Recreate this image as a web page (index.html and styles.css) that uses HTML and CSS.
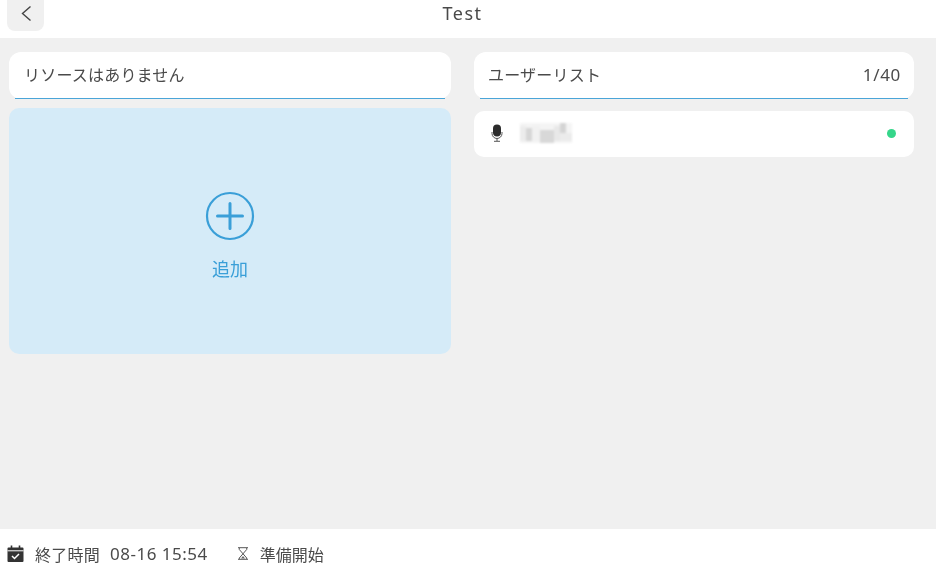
FILE: index.html
```html
<!DOCTYPE html>
<html lang="ja">
<head>
<meta charset="utf-8">
<title>Test</title>
<link rel="stylesheet" href="styles.css">
</head>
<body>
<div class="app">
  <header class="topbar">
    <button class="back" aria-label="back">
      <svg width="14" height="18" viewBox="0 0 14 18"><path d="M11.500 1.500 3.500 8.500l8 7" fill="none" stroke="#444" stroke-width="1.400"/></svg>
    </button>
    <h1 class="title">Test</h1>
  </header>
  <main class="content">
    <section class="col col-left">
      <div class="panel-head"><span>リソースはありません</span></div>
      <div class="add-card">
        <svg class="add-icon" width="50" height="50" viewBox="0 0 50 50">
          <circle cx="25" cy="25" r="23" fill="none" stroke="#3a9fd8" stroke-width="2.200"/>
          <path d="M12.500 25h25M25 12.500v25" fill="none" stroke="#3a9fd8" stroke-width="3" stroke-linecap="round"/>
        </svg>
        <span class="add-label">追加</span>
      </div>
    </section>
    <section class="col col-right">
      <div class="panel-head panel-head-right"><span>ユーザーリスト</span><span class="count">1/40</span></div>
      <div class="user-row">
        <svg class="mic" width="12" height="18" viewBox="0 0 12 18">
          <rect x="2" y="0.500" width="8" height="12" rx="4" fill="#2c2c2c"/>
          <path d="M1 8v1.500a5 5 0 0 0 10 0V8M6 14.500V17M3 17.300h6" fill="none" stroke="#555" stroke-width="1"/>
        </svg>
        <svg class="blurred" width="52" height="20" viewBox="0 0 52 20" aria-hidden="true">
          <rect width="52" height="20" fill="#f4f4f4"/>
          <rect x="0" y="3" width="6" height="15" fill="#ececec"/>
          <rect x="6" y="5" width="6" height="13" fill="#d6d6d6"/>
          <rect x="12" y="3" width="8" height="15" fill="#f1f1f1"/>
          <rect x="20" y="7" width="14" height="13" fill="#d8d8d8"/>
          <rect x="34" y="3" width="6" height="15" fill="#e8e8e8"/>
          <rect x="40" y="0" width="6" height="10" fill="#d4d4d4"/>
          <rect x="40" y="10" width="12" height="8" fill="#ebebeb"/>
        </svg>
        <span class="dot"></span>
      </div>
    </section>
  </main>
  <footer class="bottombar">
    <svg width="17" height="17" viewBox="0 0 17 17">
      <path d="M.5 3.500a1 1 0 0 1 1-1h14a1 1 0 0 1 1 1V16a1 1 0 0 1-1 1h-14a1 1 0 0 1-1-1z" fill="#333"/>
      <path d="M4.500 0.500v3M12.500 0.500v3" stroke="#333" stroke-width="1.600"/>
      <path d="M.5 5.800h16" stroke="#fff" stroke-width="1"/>
      <path d="m5 11 2.500 2.500L12 9" fill="none" stroke="#fff" stroke-width="1.500"/>
    </svg>
    <span class="end-label">終了時間</span>
    <span class="end-time">08-16 15:54</span>
    <svg class="hourglass" width="12" height="13" viewBox="0 0 12 13">
      <path d="M1 .700h10M1 12.300h10M2.300 1v1.500L9.700 11v1M9.700 1v1.500L2.300 11v1" fill="none" stroke="#555" stroke-width="1"/>
      <path d="M4 11.500 6 9l2 2.500z" fill="#666"/>
    </svg>
    <span class="status">準備開始</span>
  </footer>
</div>
</body>
</html>
```

FILE: styles.css
```css
* { box-sizing: border-box; }
html, body { margin: 0; height: 100%; }
body {
  font-family: "Noto Sans", "Noto Sans CJK JP", sans-serif;
  font-weight: 400;
  color: #4a4a4a;
  background: #f0f0f0;
  overflow: hidden;
}
.app { display: flex; flex-direction: column; height: 572px; will-change: transform; }
.topbar {
  flex: 0 0 38px;
  background: #fff;
  display: flex;
  justify-content: center;
  padding-right: 11px;
  position: relative;
}
.back {
  position: absolute;
  left: 7px;
  top: 0;
  width: 37px;
  height: 31px;
  border: 0;
  padding: 0 0 4px 0;
  background: #f0f0f0;
  border-radius: 0 0 8px 8px;
  display: flex;
  align-items: center;
  justify-content: center;
}
.title {
  margin: 0;
  font-size: 18px;
  font-weight: 400;
  letter-spacing: 1.500px;
  line-height: 26px;
  color: #4a4a4a;
}
.content {
  flex: 1;
  display: flex;
  gap: 23px;
  padding: 14px 22px 0 9px;
}
.col { display: flex; flex-direction: column; }
.col-left { width: 442px; gap: 9px; }
.col-right { width: 440px; gap: 12px; }
.panel-head {
  height: 47px;
  background: #fff;
  border-radius: 12px;
  padding: 0 13px 3px 15px;
  display: flex;
  align-items: center;
  justify-content: space-between;
  font-size: 16px;
  letter-spacing: 0.200px;
  position: relative;
}
.panel-head-right { padding-left: 14px; }
.panel-head::after {
  content: "";
  position: absolute;
  left: 6px;
  right: 6px;
  bottom: 0;
  height: 1px;
  background: #4aa5d8;
}
.count { font-size: 17px; letter-spacing: 0.700px; }
.add-card {
  height: 246px;
  background: #d5ebf8;
  border-radius: 10px;
  display: flex;
  flex-direction: column;
  align-items: center;
  padding-top: 83px;
}
.add-label {
  margin-top: 15px;
  font-size: 18px;
  line-height: 26px;
  color: #3a9fd8;
}
.user-row {
  height: 46px;
  background: #fff;
  border-radius: 10px;
  display: flex;
  align-items: center;
  padding: 0 18px 2px 17px;
}
.blurred { margin-left: 17px; filter: blur(0.8px); }
.dot {
  margin-left: auto;
  width: 9px;
  height: 9px;
  border-radius: 50%;
  background: #35d68a;
}
.bottombar {
  flex: 0 0 43px;
  background: #fff;
  display: flex;
  align-items: center;
  padding: 6px 0 0 7px;
  font-size: 16px;
}
.end-label { margin-left: 11px; letter-spacing: 0.250px; }
.end-time { margin-left: 10px; font-size: 17px; letter-spacing: 0.500px; }
.hourglass { margin-left: 29px; }
.status { margin-left: 11px; }
```
